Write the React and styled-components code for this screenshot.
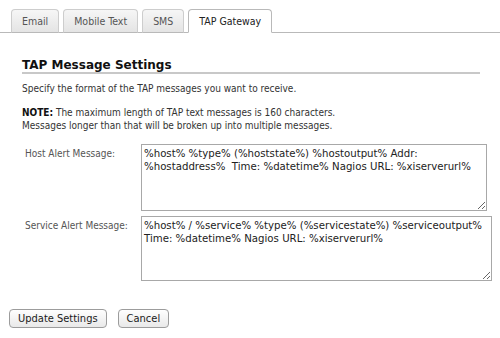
import React from "react";
import styled, { createGlobalStyle } from "styled-components";

const GlobalStyle = createGlobalStyle`
  body {
    margin: 0;
    background: #fff;
    font-family: "DejaVu Sans Condensed", "DejaVu Sans", Verdana, sans-serif;
    font-size: 10px;
    color: #333;
  }
`;

const TabBar = styled.ul`
  display: flex;
  gap: 4px;
  margin: 0;
  padding: 9px 0 0 11px;
  list-style: none;
  border-bottom: 1px solid #b9b9b9;
`;

const Tab = styled.li`
  height: 22px;
  line-height: 22px;
  padding: 0 10px;
  margin-bottom: -1px;
  font-size: 10.5px;
  color: ${(p) => (p.$active ? "#222" : "#555")};
  border: 1px solid ${(p) => (p.$active ? "#b9b9b9" : "#cdcdcd")};
  border-bottom: 1px solid ${(p) => (p.$active ? "#fff" : "#b9b9b9")};
  border-radius: 4px 4px 0 0;
  background: ${(p) =>
    p.$active ? "#fff" : "linear-gradient(#f6f6f6, #e4e4e4)"};
`;

const Content = styled.div`
  padding: 26px 8px 0 22px;
`;

const Heading = styled.h2`
  margin: 0 12px 8px 0;
  padding-bottom: 1px;
  font-family: "DejaVu Sans", Verdana, sans-serif;
  font-size: 12px;
  line-height: 12px;
  font-weight: bold;
  color: #111;
  border-bottom: 2px solid #c8c8c8;
`;

const Para = styled.p`
  margin: 0 0 11px;
  line-height: 13px;
`;

const Strong = styled.b`
  color: #111;
`;

const FormTable = styled.table`
  border-collapse: collapse;
  margin: 12px 0 0;

  td {
    padding: 0;
    vertical-align: top;
  }
`;

const Label = styled.td`
  width: 116px;
  padding: 4px 0 0 3px !important;
  color: #555;
  white-space: nowrap;
`;

const Field = styled.td`
  padding-bottom: 5px !important;
`;

const MessageBox = styled.textarea`
  display: block;
  box-sizing: border-box;
  width: ${(p) => p.$w}px;
  height: ${(p) => p.$h}px;
  margin: 0;
  padding: 2px 2px;
  font-family: "DejaVu Sans", Verdana, sans-serif;
  font-size: 10.2px;
  line-height: 13px;
  color: #222;
  border: 1px solid #a8a8a8;
  border-radius: 0;
  resize: both;
  outline: none;
`;

const Actions = styled.div`
  display: flex;
  gap: 11px;
  padding: 23px 0 0 9px;
`;

const Button = styled.button`
  height: 19px;
  padding: 0 8px;
  font-family: "DejaVu Sans Condensed", "DejaVu Sans", sans-serif;
  font-size: 11px;
  color: #1a1a1a;
  border: 1px solid #9c9c9c;
  border-radius: 4px;
  background: linear-gradient(#fefefe, #e9e9e9);
`;

export default function App() {
  return (
    <>
      <GlobalStyle />
      <TabBar>
        <Tab>Email</Tab>
        <Tab>Mobile Text</Tab>
        <Tab>SMS</Tab>
        <Tab $active>TAP Gateway</Tab>
      </TabBar>
      <Content>
        <Heading>TAP Message Settings</Heading>
        <Para>Specify the format of the TAP messages you want to receive.</Para>
        <Para>
          <Strong>NOTE:</Strong> The maximum length of TAP text messages is 160 characters.
          <br />
          Messages longer than that will be broken up into multiple messages.
        </Para>
        <FormTable>
          <tbody>
            <tr>
              <Label>Host Alert Message:</Label>
              <Field>
                <MessageBox
                  $w={346}
                  $h={67}
                  defaultValue={
                    "%host% %type% (%hoststate%) %hostoutput% Addr: %hostaddress%  Time: %datetime% Nagios URL: %xiserverurl%"
                  }
                />
              </Field>
            </tr>
            <tr>
              <Label>Service Alert Message:</Label>
              <Field>
                <MessageBox
                  $w={351}
                  $h={65}
                  defaultValue={
                    "%host% / %service% %type% (%servicestate%) %serviceoutput% Time: %datetime% Nagios URL: %xiserverurl%"
                  }
                />
              </Field>
            </tr>
          </tbody>
        </FormTable>
      </Content>
      <Actions>
        <Button>Update Settings</Button>
        <Button>Cancel</Button>
      </Actions>
    </>
  );
}
